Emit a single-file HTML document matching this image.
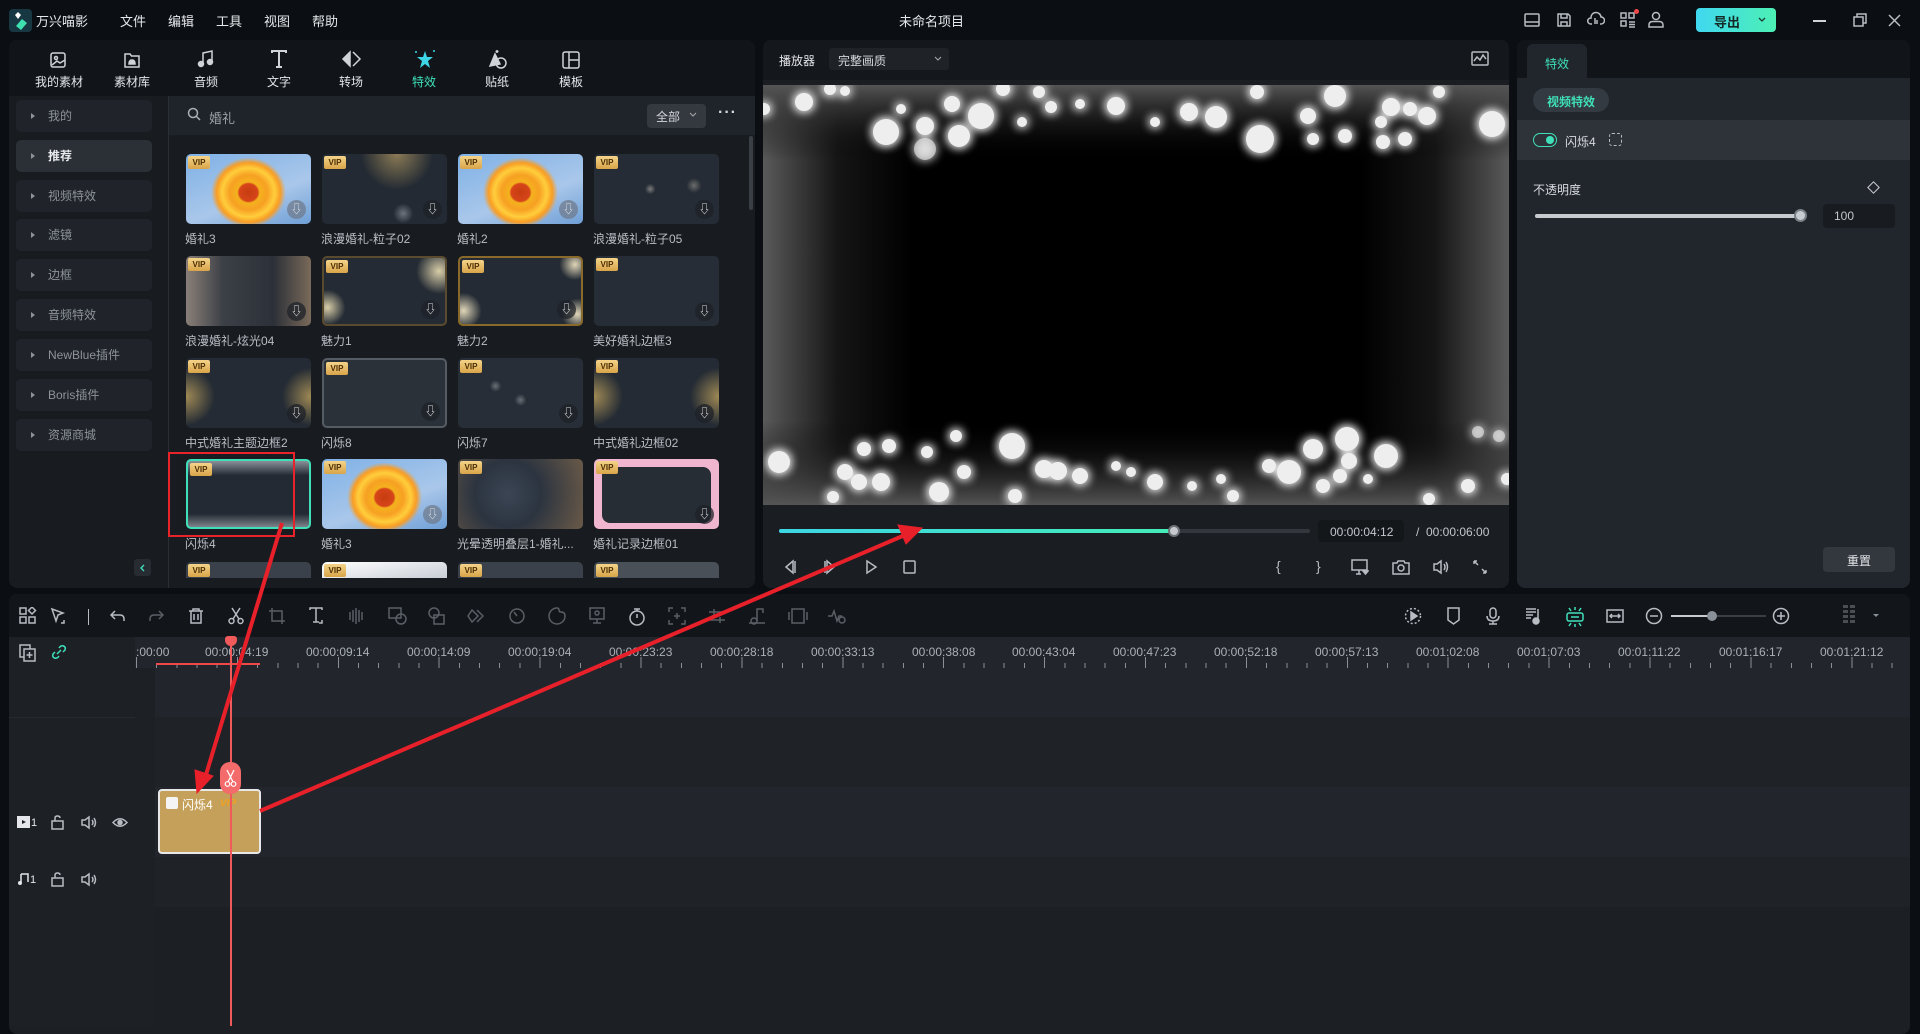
<!DOCTYPE html>
<html><head><meta charset="utf-8">
<style>
*{box-sizing:border-box;margin:0;padding:0}
body{width:1920px;height:1026px;background:#0b0e12;font-family:"Liberation Sans","Noto Sans CJK SC",sans-serif;color:#c9ccd1;font-size:13px;position:relative;overflow:hidden}
.a{position:absolute}
.t{position:absolute;white-space:nowrap}
.cat{position:absolute;left:16px;width:136px;height:32px;border-radius:5px;background:#20242a;color:#8d939b;font-size:12px;line-height:32px;padding-left:32px}
.cat:before{content:"";position:absolute;left:15px;top:13px;border-left:4px solid #8d939b;border-top:3px solid transparent;border-bottom:3px solid transparent}
.th{position:absolute;width:125px;height:70px;border-radius:5px;overflow:hidden;background:#262d36}
.vip{position:absolute;left:2px;top:2px;width:22px;height:13px;border-radius:2px;background:linear-gradient(#f4d48a,#d9a449);color:#4a2d05;font-size:8px;font-weight:bold;line-height:13px;text-align:center}
.dl{position:absolute;right:5px;bottom:5px;width:19px;height:19px;border-radius:50%;background:rgba(30,34,40,.75)}
.dl:after{content:"⇩";position:absolute;left:0;right:0;top:1px;text-align:center;color:#ddd;font-size:12px;line-height:16px}
.lb{position:absolute;font-size:12px;color:#b9bec5}
.flower{background:radial-gradient(ellipse 30% 50% at 50% 55%,#c63d10 0,#d7451a 25%,#f4b21d 30%,#f7a023 50%,#ffce3c 70%,#f89d25 85%,rgba(246,170,50,0) 100%),linear-gradient(160deg,#7fb1e6,#a9c7ea 60%,#6f9fd6)}
.ic{position:absolute;stroke:#b8bcc3;fill:none;stroke-width:1.5}
.tb{position:absolute;top:607px}
</style></head><body>

<!-- title bar -->
<div class="a" style="left:9px;top:9px;width:23px;height:23px;border-radius:4px;background:#173843"></div>
<svg class="a" style="left:12px;top:11px" width="18" height="20"><path d="M6 1 L9 4 L6 8 L3 4Z" fill="#fff"/><path d="M10 8 L15 12 L9 19 L4 15Z" fill="#3fe0b0"/></svg>
<div class="t" style="left:36px;top:11px;font-size:13px;color:#e6e8eb">万兴喵影</div>
<div class="t" style="left:120px;top:11px;color:#e6e8eb">文件</div>
<div class="t" style="left:168px;top:11px;color:#e6e8eb">编辑</div>
<div class="t" style="left:216px;top:11px;color:#e6e8eb">工具</div>
<div class="t" style="left:264px;top:11px;color:#e6e8eb">视图</div>
<div class="t" style="left:312px;top:11px;color:#e6e8eb">帮助</div>
<div class="t" style="left:899px;top:11px;color:#e6e8eb">未命名项目</div>
<svg class="ic" style="left:1524px;top:12px" width="16" height="16"><rect x="1" y="2" width="14" height="12" rx="1"/><path d="M1 10H15"/></svg>
<svg class="ic" style="left:1556px;top:12px" width="16" height="16"><path d="M2 2H12L14 4V14H2Z M5 2V6H11V2 M5 14V10H11V14"/></svg>
<svg class="ic" style="left:1587px;top:11px" width="18" height="16"><path d="M5 13H3.5A3 3 0 0 1 4 7A5 5 0 0 1 14 6A3.5 3.5 0 0 1 14 13H13 M8 7V13 M10 9V13"/></svg>
<svg class="ic" style="left:1620px;top:12px" width="16" height="16"><rect x="1" y="1" width="5" height="5"/><rect x="9" y="1" width="5" height="5"/><rect x="1" y="9" width="5" height="5"/><path d="M9 10H15M9 12.5H15M9 15H15"/></svg>
<div class="a" style="left:1634px;top:9px;width:5px;height:5px;border-radius:50%;background:#f04848"></div>
<svg class="ic" style="left:1648px;top:11px" width="16" height="17"><circle cx="8" cy="5" r="3.5"/><path d="M1 16V14Q1 10.5 5 10.5H11Q15 10.5 15 14V16Z"/></svg>
<div class="a" style="left:1696px;top:8px;width:80px;height:24px;border-radius:4px;background:linear-gradient(90deg,#3fd8f0,#4cf0b4)"></div>
<div class="t" style="left:1714px;top:12px;font-size:13px;font-weight:bold;color:#132a24">导出</div>
<svg class="a" style="left:1757px;top:16px" width="10" height="8"><path d="M2 2L5 5L8 2" stroke="#1d3a30" fill="none" stroke-width="1.3"/></svg>
<div class="a" style="left:1813px;top:20px;width:13px;height:1.5px;background:#cfd2d6"></div>
<svg class="ic" style="left:1853px;top:13px" width="14" height="14"><rect x="1" y="4" width="9" height="9"/><path d="M4 4V1H13V10H10"/></svg>
<svg class="ic" style="left:1888px;top:14px" width="13" height="13"><path d="M1 1L12 12M12 1L1 12"/></svg>

<!-- left panel -->
<div class="a" style="left:9px;top:40px;width:746px;height:548px;border-radius:8px;background:#181b1f"></div>
<div class="a" style="left:9px;top:40px;width:746px;height:56px;border-radius:8px 8px 0 0;background:#11151a"></div>
<svg class="ic" style="left:50px;top:51px;stroke:#d0d3d8" width="18" height="18"><rect x="1" y="2" width="14" height="14" rx="2"/><circle cx="6" cy="7" r="1.5"/><path d="M2 14L7 10L10 12L15 9"/></svg>
<svg class="ic" style="left:123px;top:51px;stroke:#d0d3d8" width="18" height="18"><path d="M2 3H7L8.5 5H16V16H2Z"/><path d="M6 13Q6 9 9 9Q12 9 12 13Z" fill="#d0d3d8"/></svg>
<svg class="ic" style="left:197px;top:50px;stroke:#d0d3d8" width="18" height="18"><path d="M6 14V3L15 1V12"/><circle cx="4" cy="14" r="2.5" fill="#d0d3d8"/><circle cx="13" cy="12" r="2.5" fill="#d0d3d8"/></svg>
<svg class="ic" style="left:270px;top:50px;stroke:#d0d3d8;stroke-width:2" width="18" height="18"><path d="M2 3V1H16V3 M9 1V17 M6 17H12"/></svg>
<svg class="ic" style="left:341px;top:50px;stroke:#d0d3d8" width="22" height="18"><path d="M9 2L2 9L9 16Z" fill="#d0d3d8"/><path d="M12 2L19 9L12 16"/></svg>
<svg class="a" style="left:413px;top:48px" width="24" height="22"><path d="M12 3L14 9L20 9L15 13L17 20L12 16L7 20L9 13L4 9L10 9Z" fill="#3ed6e6"/><circle cx="3" cy="4" r="1" fill="#3ed6e6"/><circle cx="21" cy="3" r="1" fill="#3ed6e6"/></svg>
<svg class="ic" style="left:487px;top:48px;stroke:#d0d3d8" width="22" height="22"><path d="M3 18L8 6L13 16Z" fill="#d0d3d8"/><circle cx="14" cy="15" r="5"/><path d="M10 2V5M8.5 3.5H11.5"/></svg>
<svg class="ic" style="left:562px;top:51px;stroke:#d0d3d8" width="18" height="18"><rect x="1" y="1" width="16" height="16" rx="2"/><path d="M7 1V17 M7 9H17"/></svg>
<div class="t" style="left:35px;top:73px;color:#e4e6e9;font-size:12px">我的素材</div>
<div class="t" style="left:114px;top:73px;color:#e4e6e9;font-size:12px">素材库</div>
<div class="t" style="left:194px;top:73px;color:#e4e6e9;font-size:12px">音频</div>
<div class="t" style="left:267px;top:73px;color:#e4e6e9;font-size:12px">文字</div>
<div class="t" style="left:339px;top:73px;color:#e4e6e9;font-size:12px">转场</div>
<div class="t" style="left:412px;top:73px;color:#3fe0b9;font-size:12px">特效</div>
<div class="t" style="left:485px;top:73px;color:#e4e6e9;font-size:12px">贴纸</div>
<div class="t" style="left:559px;top:73px;color:#e4e6e9;font-size:12px">模板</div>
<div class="a" style="left:168px;top:96px;width:1px;height:492px;background:#2a2f36"></div>
<div class="a" style="left:169px;top:96px;width:586px;height:39px;background:#1f242a"></div>

<div class="cat" style="top:100px">我的</div>
<div class="cat" style="top:140px;background:#2b3037;color:#e8eaed;font-weight:bold">推荐</div>
<div class="cat" style="top:180px">视频特效</div>
<div class="cat" style="top:219px">滤镜</div>
<div class="cat" style="top:259px">边框</div>
<div class="cat" style="top:299px">音频特效</div>
<div class="cat" style="top:339px">NewBlue插件</div>
<div class="cat" style="top:379px">Boris插件</div>
<div class="cat" style="top:419px">资源商城</div>
<div class="a" style="left:134px;top:559px;width:17px;height:17px;border-radius:3px;background:#272c33"></div>
<svg class="a" style="left:138px;top:563px" width="10" height="10"><path d="M6 2L3 5L6 8" stroke="#3fe0b9" fill="none" stroke-width="1.4"/></svg>

<svg class="ic" style="left:187px;top:107px;stroke:#aab0b7" width="14" height="14"><circle cx="6" cy="6" r="4.5"/><path d="M9.5 9.5L13 13"/></svg>
<div class="t" style="left:209px;top:108px;color:#9aa0a8">婚礼</div>
<div class="a" style="left:647px;top:104px;width:59px;height:24px;border-radius:4px;background:#343940"></div>
<div class="t" style="left:656px;top:108px;color:#d4d7db;font-size:12px">全部</div>
<svg class="a" style="left:689px;top:112px" width="8" height="6"><path d="M1 1L4 4L7 1" stroke="#aaa" fill="none"/></svg>
<div class="t" style="left:718px;top:104px;color:#d4d7db;font-size:16px;font-weight:bold;letter-spacing:1px">···</div>
<div class="a" style="left:749px;top:136px;width:4px;height:74px;border-radius:2px;background:#3a3f46"></div>

<!-- grid row1 -->
<div class="th flower" style="left:186px;top:154px"><div class="vip">VIP</div><div class="dl" style="background:rgba(110,120,135,.7)"></div></div>
<div class="th" style="left:322px;top:154px;background:radial-gradient(circle at 60% 0,#8a7a55 0,rgba(40,46,56,0) 35%),radial-gradient(circle at 65% 85%,#6c737c 0,rgba(0,0,0,0) 10%),#232a33"><div class="vip">VIP</div><div class="dl"></div></div>
<div class="th flower" style="left:458px;top:154px"><div class="vip">VIP</div><div class="dl" style="background:rgba(110,120,135,.7)"></div></div>
<div class="th" style="left:594px;top:154px;background:radial-gradient(circle at 45% 50%,#7b7b7b 0,rgba(0,0,0,0) 7%),radial-gradient(circle at 80% 45%,#6b6b6b 0,rgba(0,0,0,0) 7%),#252c35"><div class="vip">VIP</div><div class="dl"></div></div>
<div class="lb" style="left:185px;top:230px">婚礼3</div>
<div class="lb" style="left:321px;top:230px">浪漫婚礼-粒子02</div>
<div class="lb" style="left:457px;top:230px">婚礼2</div>
<div class="lb" style="left:593px;top:230px">浪漫婚礼-粒子05</div>
<!-- row2 -->
<div class="th" style="left:186px;top:256px;background:linear-gradient(90deg,#8a7f78,#3b3f46 30%,#2c3038 70%,#7a6a5a)"><div class="vip">VIP</div><div class="dl"></div></div>
<div class="th" style="left:322px;top:256px;border:2px solid #5a4a2e;background:radial-gradient(circle at 95% 20%,#d8cda8 0,rgba(0,0,0,0) 18%),radial-gradient(circle at 3% 75%,#d8cda8 0,rgba(0,0,0,0) 14%),#242b34"><div class="vip">VIP</div><div class="dl"></div></div>
<div class="th" style="left:458px;top:256px;border:2px solid #8a6a2a;background:radial-gradient(circle at 95% 10%,#e0d6b8 0,rgba(0,0,0,0) 12%),radial-gradient(circle at 3% 80%,#e0d6b8 0,rgba(0,0,0,0) 14%),radial-gradient(circle at 97% 85%,#e0d6b8 0,rgba(0,0,0,0) 12%),#242b34"><div class="vip">VIP</div><div class="dl"></div></div>
<div class="th" style="left:594px;top:256px"><div class="vip">VIP</div><div class="dl"></div></div>
<div class="lb" style="left:185px;top:332px">浪漫婚礼-炫光04</div>
<div class="lb" style="left:321px;top:332px">魅力1</div>
<div class="lb" style="left:457px;top:332px">魅力2</div>
<div class="lb" style="left:593px;top:332px">美好婚礼边框3</div>
<!-- row3 -->
<div class="th" style="left:186px;top:358px;background:radial-gradient(circle at 0 55%,#a08a55 0,rgba(0,0,0,0) 22%),radial-gradient(circle at 100% 55%,#a08a55 0,rgba(0,0,0,0) 22%),#242b34"><div class="vip">VIP</div><div class="dl"></div></div>
<div class="th" style="left:322px;top:358px;border:2px solid #565c64;background:#2a3139"><div class="vip">VIP</div><div class="dl"></div></div>
<div class="th" style="left:458px;top:358px;background:radial-gradient(circle at 50% 60%,#6b7076 0,rgba(0,0,0,0) 8%),radial-gradient(circle at 30% 40%,#6b7076 0,rgba(0,0,0,0) 6%),#272e37"><div class="vip">VIP</div><div class="dl"></div></div>
<div class="th" style="left:594px;top:358px;background:radial-gradient(circle at 0 55%,#a08a55 0,rgba(0,0,0,0) 22%),radial-gradient(circle at 100% 55%,#a08a55 0,rgba(0,0,0,0) 22%),#242b34"><div class="vip">VIP</div><div class="dl"></div></div>
<div class="lb" style="left:185px;top:434px">中式婚礼主题边框2</div>
<div class="lb" style="left:321px;top:434px">闪烁8</div>
<div class="lb" style="left:457px;top:434px">闪烁7</div>
<div class="lb" style="left:593px;top:434px">中式婚礼边框02</div>
<!-- row4 -->
<div class="th" style="left:186px;top:459px;border:2px solid #3fe0b9;background:linear-gradient(#8a9098,rgba(0,0,0,0) 22%,rgba(0,0,0,0) 80%,#7d838a),#232a33"><div class="vip">VIP</div></div>
<div class="th flower" style="left:322px;top:459px"><div class="vip">VIP</div><div class="dl" style="background:rgba(110,120,135,.7)"></div></div>
<div class="th" style="left:458px;top:459px;background:radial-gradient(circle at 40% 50%,#3b4554 0,#2c3440 40%,#6a5a48 100%)"><div class="vip">VIP</div></div>
<div class="th" style="left:594px;top:459px;background:#f0b6d0"><div class="a" style="left:8px;top:8px;right:8px;bottom:6px;border-radius:8px;background:#262d35"></div><div class="vip">VIP</div><div class="dl"></div></div>
<div class="lb" style="left:185px;top:535px">闪烁4</div>
<div class="lb" style="left:321px;top:535px">婚礼3</div>
<div class="lb" style="left:457px;top:535px">光晕透明叠层1-婚礼...</div>
<div class="lb" style="left:593px;top:535px">婚礼记录边框01</div>
<!-- row5 partial -->
<div class="a" style="left:186px;top:562px;width:125px;height:16px;border-radius:5px 5px 0 0;background:#3a414a"><div class="vip">VIP</div></div>
<div class="a" style="left:322px;top:562px;width:125px;height:16px;border-radius:5px 5px 0 0;background:linear-gradient(170deg,#fff,#c9ced6)"><div class="vip">VIP</div></div>
<div class="a" style="left:458px;top:562px;width:125px;height:16px;border-radius:5px 5px 0 0;background:#3a414a"><div class="vip">VIP</div></div>
<div class="a" style="left:594px;top:562px;width:125px;height:16px;border-radius:5px 5px 0 0;background:#4a5058"><div class="vip">VIP</div></div>
<div class="a" style="left:169px;top:578px;width:580px;height:10px;background:#181b1f"></div>

<!-- player -->
<div class="a" style="left:763px;top:40px;width:746px;height:548px;border-radius:8px;background:#1a1d21"></div>
<div class="a" style="left:763px;top:40px;width:746px;height:40px;border-radius:8px 8px 0 0;background:#14171b"></div>
<div class="t" style="left:779px;top:52px;color:#e4e6e9;font-size:12px">播放器</div>
<div class="a" style="left:829px;top:48px;width:120px;height:22px;border-radius:3px;background:#1f2328"></div>
<div class="t" style="left:838px;top:52px;color:#d4d7db;font-size:12px">完整画质</div>
<svg class="a" style="left:934px;top:56px" width="8" height="6"><path d="M1 1L4 4L7 1" stroke="#aaa" fill="none"/></svg>
<svg class="ic" style="left:1471px;top:51px" width="18" height="15"><rect x="1" y="1" width="16" height="13" rx="1"/><path d="M3 10L6 6L9 9L12 4L15 8"/></svg>

<svg class="a" style="left:763px;top:85px" width="746" height="420">
<defs>
<linearGradient id="vh" x1="0" y1="0" x2="1" y2="0"><stop offset="0" stop-color="#5a5a5a"/><stop offset="0.1" stop-color="#151515"/><stop offset="0.2" stop-color="#000"/><stop offset="0.8" stop-color="#000"/><stop offset="0.9" stop-color="#151515"/><stop offset="1" stop-color="#5a5a5a"/></linearGradient>
<linearGradient id="vt" x1="0" y1="0" x2="0" y2="1"><stop offset="0" stop-color="#555"/><stop offset="0.18" stop-color="#000" stop-opacity="0"/><stop offset="0.8" stop-color="#000" stop-opacity="0"/><stop offset="1" stop-color="#555"/></linearGradient>
<filter id="gl" x="-30%" y="-30%" width="160%" height="160%"><feGaussianBlur stdDeviation="5" result="b"/><feMerge><feMergeNode in="b"/><feMergeNode in="b"/><feMergeNode in="SourceGraphic"/></feMerge></filter>
</defs>
<rect width="746" height="420" fill="url(#vh)"/>
<rect width="746" height="420" fill="url(#vt)"/>
<g fill="#eeeeee" filter="url(#gl)">
<circle cx="41" cy="17" r="9"/><circle cx="123" cy="47" r="13"/><circle cx="162" cy="41" r="9"/><circle cx="196" cy="51" r="11"/><circle cx="218" cy="31" r="13"/><circle cx="189" cy="19" r="8"/><circle cx="240" cy="4" r="7"/><circle cx="276" cy="7" r="6"/><circle cx="288" cy="22" r="6"/><circle cx="317" cy="19" r="5"/><circle cx="353" cy="21" r="9"/><circle cx="392" cy="37" r="5"/><circle cx="426" cy="27" r="9"/><circle cx="453" cy="32" r="11"/><circle cx="497" cy="54" r="14"/><circle cx="494" cy="7" r="7"/><circle cx="545" cy="31" r="8"/><circle cx="572" cy="11" r="11"/><circle cx="582" cy="51" r="7"/><circle cx="550" cy="54" r="6"/><circle cx="618" cy="37" r="6"/><circle cx="620" cy="57" r="7"/><circle cx="642" cy="54" r="7"/><circle cx="628" cy="22" r="9"/><circle cx="664" cy="31" r="9"/><circle cx="676" cy="7" r="6"/><circle cx="729" cy="39" r="13"/><circle cx="647" cy="24" r="7"/><circle cx="67" cy="4" r="6"/><circle cx="82" cy="6" r="5"/><circle cx="138" cy="24" r="5"/><circle cx="259" cy="37" r="5"/><circle cx="1" cy="24" r="6"/><circle cx="162" cy="64" r="11" opacity=".6"/>
<circle cx="16" cy="377" r="11"/><circle cx="101" cy="364" r="7"/><circle cx="126" cy="361" r="7"/><circle cx="82" cy="387" r="8"/><circle cx="96" cy="397" r="8"/><circle cx="118" cy="397" r="9"/><circle cx="176" cy="407" r="10"/><circle cx="164" cy="367" r="6"/><circle cx="193" cy="351" r="6"/><circle cx="201" cy="387" r="7"/><circle cx="249" cy="361" r="13"/><circle cx="281" cy="384" r="9"/><circle cx="295" cy="386" r="9"/><circle cx="317" cy="391" r="8"/><circle cx="353" cy="381" r="5"/><circle cx="368" cy="387" r="5"/><circle cx="392" cy="397" r="8"/><circle cx="429" cy="401" r="5"/><circle cx="458" cy="394" r="5"/><circle cx="470" cy="411" r="6"/><circle cx="506" cy="381" r="7"/><circle cx="526" cy="387" r="12"/><circle cx="550" cy="364" r="10"/><circle cx="560" cy="401" r="7"/><circle cx="584" cy="354" r="12"/><circle cx="586" cy="376" r="8"/><circle cx="577" cy="391" r="7"/><circle cx="623" cy="371" r="12"/><circle cx="605" cy="394" r="5"/><circle cx="705" cy="401" r="7"/><circle cx="666" cy="414" r="6"/><circle cx="715" cy="347" r="6" opacity=".6"/><circle cx="736" cy="351" r="6" opacity=".6"/><circle cx="70" cy="412" r="6"/><circle cx="252" cy="411" r="7"/><circle cx="744" cy="394" r="6"/>
</g>
</svg>

<!-- progress -->
<div class="a" style="left:779px;top:529px;width:531px;height:4px;border-radius:2px;background:#33373d"></div>
<div class="a" style="left:779px;top:529px;width:395px;height:4px;border-radius:2px;background:linear-gradient(90deg,#3cd6e4,#45ecb8)"></div>
<div class="a" style="left:1168px;top:525px;width:12px;height:12px;border-radius:50%;background:#c6cacf;border:2px solid #6d7278"></div>
<div class="a" style="left:1318px;top:520px;width:86px;height:22px;border-radius:4px;background:#14171a"></div>
<div class="t" style="left:1330px;top:525px;font-size:12px;color:#c3c7cc">00:00:04:12</div>
<div class="t" style="left:1416px;top:525px;font-size:12px;color:#c3c7cc">/&nbsp;&nbsp;00:00:06:00</div>
<svg class="ic" style="left:782px;top:559px" width="16" height="16"><path d="M11 2L4 8L11 14Z M13 2V14"/></svg>
<svg class="ic" style="left:822px;top:559px" width="16" height="16"><path d="M5 2L12 8L5 14Z M3 2V14"/></svg>
<svg class="ic" style="left:863px;top:559px" width="16" height="16"><path d="M4 2L13 8L4 14Z"/></svg>
<svg class="ic" style="left:902px;top:559px" width="16" height="16"><rect x="2" y="2" width="11" height="12" rx="1"/></svg>
<div class="t" style="left:1276px;top:558px;font-size:14px;color:#b8bcc3">{</div>
<div class="t" style="left:1316px;top:558px;font-size:14px;color:#b8bcc3">}</div>
<svg class="ic" style="left:1351px;top:559px" width="18" height="16"><rect x="1" y="1" width="15" height="10"/><path d="M8 11V15M5 15H10"/><path d="M12 12H17L14.5 15Z" fill="#b8bcc3"/></svg>
<svg class="ic" style="left:1392px;top:559px" width="18" height="16"><path d="M1 4H5L6 2H12L13 4H17V15H1Z"/><circle cx="9" cy="9" r="3"/></svg>
<svg class="ic" style="left:1432px;top:559px" width="18" height="16"><path d="M2 5H5L9 2V14L5 11H2Z M12 5Q14 8 12 11 M14 3Q17 8 14 13"/></svg>
<svg class="ic" style="left:1472px;top:559px" width="16" height="16"><path d="M2 2L6 6M2 2V5M2 2H5 M14 14L10 10M14 14V11M14 14H11"/></svg>

<!-- right panel -->
<div class="a" style="left:1517px;top:40px;width:393px;height:548px;border-radius:8px;background:#21262c"></div>
<div class="a" style="left:1517px;top:40px;width:393px;height:38px;border-radius:8px 8px 0 0;background:#11151a"></div>
<div class="a" style="left:1527px;top:44px;width:60px;height:34px;border-radius:6px 6px 0 0;background:#21262c"></div>
<div class="t" style="left:1545px;top:55px;color:#3fe0b9;font-size:12px">特效</div>
<div class="a" style="left:1533px;top:88px;width:76px;height:24px;border-radius:12px;background:#343a41"></div>
<div class="t" style="left:1547px;top:93px;color:#3fe0b9;font-size:12px;font-weight:bold">视频特效</div>
<div class="a" style="left:1517px;top:120px;width:393px;height:40px;background:#2e333a"></div>
<div class="a" style="left:1533px;top:133px;width:24px;height:14px;border-radius:7px;border:1.5px solid #3fe0b9"></div>
<div class="a" style="left:1546px;top:136px;width:8px;height:8px;border-radius:50%;background:#3fe0b9"></div>
<div class="t" style="left:1565px;top:133px;color:#d8dbdf;font-size:12px">闪烁4</div>
<div class="a" style="left:1609px;top:133px;width:13px;height:13px;border-radius:3px;border:1.5px dashed #b8bcc3"></div>
<div class="t" style="left:1533px;top:181px;color:#d8dbdf;font-size:12px">不透明度</div>
<div class="a" style="left:1869px;top:183px;width:9px;height:9px;border:1.3px solid #d0d3d8;transform:rotate(45deg)"></div>
<div class="a" style="left:1535px;top:214px;width:266px;height:4px;border-radius:2px;background:#c8ccd1"></div>
<div class="a" style="left:1794px;top:209px;width:13px;height:13px;border-radius:50%;background:#c8ccd1;border:2px solid #7a8087"></div>
<div class="a" style="left:1823px;top:204px;width:72px;height:24px;border-radius:4px;background:#181b1f"></div>
<div class="t" style="left:1834px;top:209px;color:#c3c7cc;font-size:12px">100</div>
<div class="a" style="left:1823px;top:547px;width:72px;height:25px;border-radius:4px;background:#33383f"></div>
<div class="t" style="left:1847px;top:552px;color:#e4e6e9;font-size:12px">重置</div>

<!-- timeline -->
<div class="a" style="left:9px;top:594px;width:1901px;height:440px;border-radius:8px;background:#1c2025"></div>
<div class="a" style="left:9px;top:594px;width:1901px;height:43px;border-radius:8px 8px 0 0;background:#12151a"></div>
<div class="a" style="left:9px;top:637px;width:126px;height:389px;background:#1d2126"></div>
<div class="a" style="left:135px;top:637px;width:1775px;height:31px;background:#22262c"></div>
<div class="a" style="left:135px;top:668px;width:20px;height:358px;background:#1d2126"></div>
<div class="a" style="left:155px;top:668px;width:1755px;height:49px;background:#22262c"></div>
<div class="a" style="left:155px;top:717px;width:1755px;height:70px;background:#1f2328"></div>
<div class="a" style="left:155px;top:787px;width:1755px;height:70px;background:#22262c"></div>
<div class="a" style="left:155px;top:857px;width:1755px;height:50px;background:#1f2328"></div>
<div class="a" style="left:155px;top:907px;width:1755px;height:119px;background:#1c2025"></div>
<div class="a" style="left:9px;top:717px;width:126px;height:1px;background:#26292e"></div>

<svg class="ic tb" style="left:19px" width="18" height="18"><rect x="1" y="1" width="6" height="6"/><rect x="1" y="10" width="6" height="6"/><rect x="10" y="10" width="6" height="6"/><path d="M13 0L16.5 3.5L13 7L9.5 3.5Z"/></svg>
<svg class="ic tb" style="left:50px" width="18" height="18"><path d="M2 2L13 6L8 8L6 14Z"/><path d="M14 13V16H11" /></svg>
<div class="a" style="left:88px;top:609px;width:1px;height:16px;background:#b8bcc3"></div>
<svg class="ic tb" style="left:109px" width="18" height="18"><path d="M6 4L2 8L6 12 M2 8H11Q15 8 15 12V14"/></svg>
<svg class="ic tb" style="left:147px;stroke:#5a5f66" width="18" height="18"><path d="M12 4L16 8L12 12 M16 8H7Q3 8 3 12V14"/></svg>
<svg class="ic tb" style="left:187px" width="18" height="18"><path d="M2 4H16 M6 4V2H12V4 M4 4V16H14V4 M7 7V13M11 7V13"/></svg>
<svg class="ic tb" style="left:227px" width="18" height="18"><path d="M5 1L12 12 M13 1L6 12"/><circle cx="4.5" cy="14" r="2.5"/><circle cx="13.5" cy="14" r="2.5"/></svg>
<svg class="ic tb" style="left:268px;stroke:#5a5f66" width="18" height="18"><path d="M4 1V14H17 M1 4H14V17"/></svg>
<svg class="ic tb" style="left:308px" width="18" height="18"><path d="M2 3V1H14V3 M8 1V15 M5 15H11"/><path d="M14 13V16H11"/></svg>
<svg class="ic tb" style="left:348px;stroke:#5a5f66" width="18" height="18"><path d="M2 5V13M5 3V15M8 1V17M11 3V15M14 5V13"/></svg>
<svg class="ic tb" style="left:388px;stroke:#5a5f66" width="20" height="18"><rect x="1" y="1" width="12" height="10"/><circle cx="13" cy="12" r="5"/></svg>
<svg class="ic tb" style="left:427px;stroke:#5a5f66" width="20" height="18"><circle cx="7" cy="6" r="5"/><rect x="7" y="8" width="10" height="9"/></svg>
<svg class="ic tb" style="left:467px;stroke:#5a5f66" width="18" height="18"><path d="M5 3L11 9L5 15L1 9Z M10 3L16 9L10 15"/></svg>
<svg class="ic tb" style="left:508px;stroke:#5a5f66" width="18" height="18"><circle cx="9" cy="9" r="7"/><path d="M9 9L6 5"/></svg>
<svg class="ic tb" style="left:548px;stroke:#5a5f66" width="18" height="18"><path d="M9 1A8 8 0 1 0 17 9Q17 5 13 5Q11 5 11 3Q11 1 9 1Z"/></svg>
<svg class="ic tb" style="left:588px;stroke:#5a5f66" width="18" height="18"><rect x="2" y="1" width="14" height="11"/><circle cx="9" cy="6" r="2"/><path d="M9 12V16M5 16H13"/></svg>
<svg class="ic tb" style="left:628px" width="18" height="20"><circle cx="9" cy="11" r="7"/><path d="M9 11V7 M6 2H12 M9 2V4"/></svg>
<svg class="ic tb" style="left:668px;stroke:#5a5f66" width="18" height="18"><path d="M1 5V1H5M13 1H17V5M17 13V17H13M5 17H1V13M9 6V12M6 9H12"/></svg>
<svg class="ic tb" style="left:708px;stroke:#5a5f66" width="18" height="18"><path d="M1 5H17M1 13H17M6 2V8M12 10V16"/></svg>
<svg class="ic tb" style="left:748px;stroke:#5a5f66" width="18" height="18"><path d="M9 14V2H15V6 M1 16H17"/><circle cx="6" cy="14" r="3"/></svg>
<svg class="ic tb" style="left:788px;stroke:#5a5f66" width="20" height="18"><rect x="4" y="2" width="12" height="14"/><path d="M1 5V13M19 5V13"/></svg>
<svg class="ic tb" style="left:827px;stroke:#5a5f66" width="20" height="18"><path d="M1 9H5L7 4L10 14L12 9H15"/><circle cx="15" cy="13" r="3"/></svg>

<svg class="ic tb" style="left:1404px" width="18" height="18"><circle cx="9" cy="9" r="7.5" stroke-dasharray="2 2"/><path d="M7 5L13 9L7 13Z" fill="#b8bcc3"/></svg>
<svg class="ic tb" style="left:1445px" width="18" height="18"><path d="M3 1H14V13L8.5 17L3 13Z"/></svg>
<svg class="ic tb" style="left:1484px" width="18" height="18"><rect x="6" y="1" width="6" height="10" rx="3"/><path d="M3 9Q3 14 9 14Q15 14 15 9 M9 14V17 M5 17H13"/></svg>
<svg class="ic tb" style="left:1525px" width="18" height="18"><path d="M1 2H11M1 5H11M1 8H8M1 11H6 M13 2V13"/><circle cx="11" cy="14" r="3" fill="#b8bcc3"/></svg>
<svg class="ic tb" style="left:1565px;stroke:#3fe0b9" width="20" height="20"><rect x="2" y="6" width="16" height="8" rx="2"/><path d="M10 0V3M10 17V20M4 1L6 4M16 1L14 4M4 19L6 16M16 19L14 16 M6 10H14"/></svg>
<svg class="ic tb" style="left:1606px" width="18" height="18"><rect x="1" y="3" width="16" height="12"/><path d="M5 9H13M6 7L4 9L6 11M12 7L14 9L12 11"/></svg>
<svg class="ic tb" style="left:1645px" width="18" height="18"><circle cx="9" cy="9" r="7.5"/><path d="M5 9H13"/></svg>
<div class="a" style="left:1671px;top:615px;width:95px;height:2px;background:#3a3f46"></div>
<div class="a" style="left:1671px;top:615px;width:42px;height:2px;background:#c8ccd1"></div>
<div class="a" style="left:1707px;top:611px;width:10px;height:10px;border-radius:50%;background:#8a9097"></div>
<svg class="ic tb" style="left:1772px" width="18" height="18"><circle cx="9" cy="9" r="7.5"/><path d="M5 9H13M9 5V13"/></svg>
<svg class="a" style="left:1843px;top:605px" width="14" height="22"><g fill="#4a4f56"><rect x="0" y="0" width="5" height="3"/><rect x="7" y="0" width="5" height="3"/><rect x="0" y="5" width="5" height="3"/><rect x="7" y="5" width="5" height="3"/><rect x="0" y="10" width="5" height="3"/><rect x="7" y="10" width="5" height="3"/><rect x="0" y="15" width="5" height="3"/><rect x="7" y="15" width="5" height="3"/></g></svg>
<svg class="a" style="left:1872px;top:613px" width="8" height="6"><path d="M1 1H7L4 4Z" fill="#8a9097"/></svg>

<svg class="ic" style="left:19px;top:644px" width="18" height="18"><rect x="1" y="1" width="10" height="12"/><rect x="5" y="5" width="11" height="12" fill="#1d2126"/><path d="M10.5 8V14M7.5 11H13.5"/></svg>
<svg class="ic" style="left:51px;top:644px;stroke:#3fe0b9" width="16" height="16"><path d="M6 10L10 6 M4 8L2 10Q1 13 3.5 14Q6 15 8 12 M12 8L14 6Q15 3 12.5 2Q10 1 8 4"/></svg>
<div class="a" style="left:135px;top:637px;width:1775px;height:31px;font-size:12px;color:#aab0b7">
<div class="t" style="left:1px;top:8px">:00:00</div>
<div class="t" style="left:70px;top:8px">00:00:04:19</div>
<div class="t" style="left:171px;top:8px">00:00:09:14</div>
<div class="t" style="left:272px;top:8px">00:00:14:09</div>
<div class="t" style="left:373px;top:8px">00:00:19:04</div>
<div class="t" style="left:474px;top:8px">00:00:23:23</div>
<div class="t" style="left:575px;top:8px">00:00:28:18</div>
<div class="t" style="left:676px;top:8px">00:00:33:13</div>
<div class="t" style="left:777px;top:8px">00:00:38:08</div>
<div class="t" style="left:877px;top:8px">00:00:43:04</div>
<div class="t" style="left:978px;top:8px">00:00:47:23</div>
<div class="t" style="left:1079px;top:8px">00:00:52:18</div>
<div class="t" style="left:1180px;top:8px">00:00:57:13</div>
<div class="t" style="left:1281px;top:8px">00:01:02:08</div>
<div class="t" style="left:1382px;top:8px">00:01:07:03</div>
<div class="t" style="left:1483px;top:8px">00:01:11:22</div>
<div class="t" style="left:1584px;top:8px">00:01:16:17</div>
<div class="t" style="left:1685px;top:8px">00:01:21:12</div>
<div class="a" style="left:1px;top:21px;width:1775px;height:10px;background:repeating-linear-gradient(90deg,#8a9097 0 1px,transparent 1px 20.18px);clip-path:inset(5px 0 0 0)"></div>
<div class="a" style="left:1px;top:20px;width:1775px;height:10px;background:repeating-linear-gradient(90deg,#8a9097 0 1px,transparent 1px 100.9px)"></div>
</div>
<div class="a" style="left:156px;top:663px;width:104px;height:2px;background:#f04848"></div>

<svg class="a" style="left:17px;top:815px" width="20" height="14"><rect x="0" y="1" width="13" height="12" fill="#e4e6e9"/><path d="M5 5L9 7L5 9Z" fill="#1d2126"/><text x="14" y="11" font-size="11" fill="#e4e6e9" font-family="Liberation Sans">1</text></svg>
<svg class="ic" style="left:51px;top:815px" width="14" height="15"><rect x="1" y="6" width="11" height="8"/><path d="M4 6V3Q4 1 6.5 1Q9 1 9 3"/></svg>
<svg class="ic" style="left:81px;top:815px" width="16" height="15"><path d="M1 5H4L8 2V13L4 10H1Z M11 5Q13 7.5 11 10 M13 3Q16 7.5 13 12"/></svg>
<svg class="ic" style="left:112px;top:815px" width="16" height="15"><path d="M1 7.5Q8 0 15 7.5Q8 15 1 7.5Z"/><circle cx="8" cy="7.5" r="2" fill="#b8bcc3"/></svg>
<svg class="a" style="left:17px;top:872px" width="20" height="14"><path d="M4 2V11 M4 2H11V10" stroke="#e4e6e9" fill="none" stroke-width="1.5"/><circle cx="3" cy="11" r="2" fill="#e4e6e9"/><text x="13" y="11" font-size="11" fill="#e4e6e9" font-family="Liberation Sans">1</text></svg>
<svg class="ic" style="left:51px;top:872px" width="14" height="15"><rect x="1" y="6" width="11" height="8"/><path d="M4 6V3Q4 1 6.5 1Q9 1 9 3"/></svg>
<svg class="ic" style="left:81px;top:872px" width="16" height="15"><path d="M1 5H4L8 2V13L4 10H1Z M11 5Q13 7.5 11 10 M13 3Q16 7.5 13 12"/></svg>

<div class="a" style="left:158px;top:789px;width:103px;height:65px;border-radius:4px;border:2px solid #e8e8e8;background:#c5a05a"></div>
<div class="a" style="left:166px;top:797px;width:12px;height:12px;border-radius:2px;background:#f4f4f4"></div>
<div class="t" style="left:182px;top:796px;font-size:12px;color:#fff">闪烁4</div>
<div class="t" style="left:220px;top:798px;font-size:10px;font-weight:bold;font-style:italic;color:#f0a020">VIP</div>

<div class="a" style="left:230px;top:640px;width:1.5px;height:386px;background:#f05a5a"></div>
<div class="a" style="left:225px;top:636px;width:12px;height:10px;border-radius:3px 3px 6px 6px;background:#f05a5a"></div>
<div class="a" style="left:220px;top:762px;width:21px;height:32px;border-radius:10px;background:#f36b6b"></div>
<svg class="a" style="left:223px;top:768px" width="15" height="20"><path d="M4 2L10 14 M11 2L5 14" stroke="#fff" fill="none" stroke-width="1.3"/><circle cx="4.5" cy="16" r="2.3" stroke="#fff" fill="none" stroke-width="1.2"/><circle cx="10.5" cy="16" r="2.3" stroke="#fff" fill="none" stroke-width="1.2"/></svg>

<div class="a" style="left:168px;top:452px;width:127px;height:85px;border:2px solid #e8232a"></div>
<svg class="a" style="left:0;top:0" width="1920" height="1026">
<g stroke="#e8202a" stroke-width="4" fill="#e8202a">
<line x1="282" y1="523" x2="205" y2="778"/>
<path d="M197 793 L195 770 L213 776 Z" stroke-width="1"/>
<line x1="260" y1="811" x2="905" y2="535"/>
<path d="M922 528 L898 525 L906 544 Z" stroke-width="1"/>
</g>
</svg>
</body></html>
